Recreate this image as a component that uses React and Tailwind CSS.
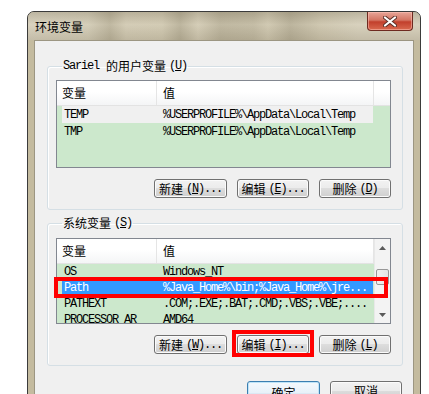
import React from 'react';

const mono = "font-['Liberation_Mono',monospace] tracking-[-1.2px]";

const Mn = ({ children, className = '' }) => (
  <span className={`${mono} ${className}`}>{children}</span>
);

const Acc = ({ k, className = '' }) => (
  <Mn className={className}>
    (<span className="underline underline-offset-[1px]">{k}</span>)
  </Mn>
);

const Btn = ({ label, k, dots = true, width, primary = false }) => {
  const skin = primary
    ? 'border-[#3c7fb1] bg-[linear-gradient(#f4f9fd,#e8f1f9_50%,#dce9f4_50%,#d2e2ef)] shadow-[inset_0_0_0_1px_#bfe4f8]'
    : 'border-[#707070] bg-[linear-gradient(#f2f2f2,#ebebeb_50%,#dddddd_50%,#cfcfcf)] shadow-[inset_0_0_0_1px_#fbfbfb]';
  return (
    <div
      className={`${width} ${primary ? 'h-[23px]' : 'h-[19px]'} shrink-0 flex items-center justify-center rounded-[3px] border ${skin} leading-none`}
    >
      <span>{label}</span>
      {k && <Acc k={k} className="ml-[3px]" />}
      {dots && <Mn>...</Mn>}
    </div>
  );
};

const Arrow = ({ down }) => (
  <svg width="7" height="4" viewBox="0 0 7 4">
    <path d={down ? 'M0 0H7L3.5 4Z' : 'M0 4H7L3.5 0Z'} fill="#5a5a5a" />
  </svg>
);

const Header = () => (
  <div className="h-[25px] shrink-0 flex bg-[linear-gradient(#ffffff,#ffffff_45%,#f4f5f6)] border-b border-[#e3e3e3]">
    <div className="w-[100px] flex items-center pl-[5px] border-r border-[#e5e5e5]">变量</div>
    <div className="w-[217px] flex items-center pl-[6px] border-r border-[#e5e5e5]">值</div>
    <div className="flex-1" />
  </div>
);

const Row = ({ name, value, sel, h }) => {
  const skin =
    sel === 'active'
      ? 'bg-[#3399ff] text-white'
      : sel === 'inactive'
        ? 'bg-[#f0f0f0]'
        : '';
  return (
    <div className={`${h} shrink-0 ml-[5px] w-[311px] flex items-center leading-none ${skin}`}>
      <div className={`w-[95px] pl-[2px] whitespace-nowrap overflow-hidden ${mono}`}>{name}</div>
      <div className={`w-[216px] pl-[6px] whitespace-nowrap overflow-hidden ${mono}`}>{value}</div>
    </div>
  );
};

const VarList = ({ rows, height, rowH, scroll }) => (
  <div className={`${height} flex border border-[#828790] bg-[#cce8cc] overflow-hidden`}>
    <div className="flex-1 min-w-0 flex flex-col">
      <Header />
      {rows.map((r) => (
        <Row key={r.name} {...r} h={rowH} />
      ))}
    </div>
    {scroll && (
      <div className="w-[16px] shrink-0 flex flex-col bg-[#f3f3f3] border-l border-[#e8e8e8]">
        <div className="h-[17px] flex items-center justify-center">
          <Arrow />
        </div>
        <div className="h-[13px]" />
        <div className="h-[16px] mx-[1px] rounded-[2px] border border-[#979797] bg-[linear-gradient(90deg,#f0f0f0,#e4e4e4)]" />
        <div className="flex-1" />
        <div className="h-[17px] flex items-center justify-center">
          <Arrow down />
        </div>
      </div>
    )}
  </div>
);

const Group = ({ legend, mt, listMt, children, buttons }) => (
  <fieldset
    className={`${mt} ml-[12px] w-[356px] pl-[8px] pr-[11px] pb-[11px] border border-[#d5dfe5] rounded-[3px] shadow-[inset_1px_1px_0_#ffffff]`}
  >
    <legend className="ml-[6px] px-[1px] leading-[14px] h-[14px] flex items-center">{legend}</legend>
    <div className={listMt}>{children}</div>
    <div className="mt-[11px] flex justify-end gap-[10px]">{buttons}</div>
  </fieldset>
);

const userRows = [
  { name: 'TEMP', value: '%USERPROFILE%\\AppData\\Local\\Temp', sel: 'inactive' },
  { name: 'TMP', value: '%USERPROFILE%\\AppData\\Local\\Temp' },
];

const sysRows = [
  { name: 'OS', value: 'Windows_NT' },
  { name: 'Path', value: '%Java_Home%\\bin;%Java_Home%\\jre...', sel: 'active' },
  { name: 'PATHEXT', value: '.COM;.EXE;.BAT;.CMD;.VBS;.VBE;....' },
  { name: 'PROCESSOR_AR', value: 'AMD64' },
];

export default function App() {
  return (
    <div className="h-[394px] w-[429px] overflow-hidden bg-white font-['Noto_Sans_CJK_SC',sans-serif] text-[12px] text-black">
      <div className="mt-[11px] ml-[27px] w-[394px] h-[420px] flex flex-col border border-[#3b3b3b] rounded-t-[7px] bg-[#c4bb9f]">
        {/* title bar */}
        <div className="h-[28px] shrink-0 flex items-start rounded-t-[6px] bg-[linear-gradient(180deg,rgba(70,60,40,0.18),rgba(255,255,255,0.05)_45%,rgba(60,50,30,0.12)),linear-gradient(90deg,#d7d0bc,#d3ccb6_60px,#bdb59d_82px,#d2cab3_98px,#d1c9b1_134px,#bab29a_152px,#d3cbb4_170px,#bdb59d_192px,#c2baa2_226px,#cfc7af_240px,#b9b199_262px,#cdc5ad_292px,#d6cfba_330px,#d6cfba)]">
          <div className="pl-[7px] pt-[8px] leading-[14px]">环境变量</div>
          <div className="ml-auto mr-[7px] w-[46px] h-[19px] flex items-center justify-center rounded-b-[4px] border border-t-0 border-[#6e2a20] bg-[linear-gradient(#e8a598,#d47563_45%,#c23f2c_55%,#d9694f)] shadow-[inset_0_0_0_1px_rgba(255,200,190,0.5)]">
            <svg width="14" height="11" viewBox="0 0 14 11">
              <path d="M2 1.5L12 9.5M12 1.5L2 9.5" stroke="#5a3028" strokeWidth="4" strokeLinecap="round" />
              <path d="M2 1.5L12 9.5M12 1.5L2 9.5" stroke="#ffffff" strokeWidth="2.2" strokeLinecap="round" />
            </svg>
          </div>
        </div>

        {/* client area */}
        <div className="mx-[6px] flex-1 relative border border-[#9c9682] bg-[#f0f0f0]">
          <Group
            mt="mt-[18px]"
            listMt="mt-[7px]"
            legend={
              <>
                <Mn>Sariel</Mn>
                <span className="ml-[7px]">的用户变量</span>
                <Acc k="U" className="ml-[3px]" />
              </>
            }
            buttons={
              <>
                <Btn label="新建" k="N" width="w-[73px]" />
                <Btn label="编辑" k="E" width="w-[72px]" />
                <Btn label="删除" k="D" dots={false} width="w-[72px]" />
              </>
            }
          >
            <VarList rows={userRows} height="h-[88px]" rowH="h-[17px]" />
          </Group>

          <Group
            mt="mt-[6px]"
            listMt="mt-[8px]"
            legend={
              <>
                <span>系统变量</span>
                <Acc k="S" className="ml-[3px]" />
              </>
            }
            buttons={
              <>
                <Btn label="新建" k="W" width="w-[73px]" />
                <Btn label="编辑" k="I" width="w-[72px]" />
                <Btn label="删除" k="L" dots={false} width="w-[72px]" />
              </>
            }
          >
            <VarList rows={sysRows} height="h-[86px]" rowH="h-[16px]" scroll />
          </Group>

          <div className="mt-[15px] mr-[11px] flex justify-end gap-[10px]">
            <Btn label="确定" dots={false} width="w-[73px]" primary />
            <Btn label="取消" dots={false} width="w-[72px]" />
          </div>

          {/* red annotation boxes */}
          <div className="absolute left-[19px] top-[236px] w-[334px] h-[21px] border-[4px] border-[#ff0000] pointer-events-none" />
          <div className="absolute left-[197px] top-[289px] w-[82px] h-[27px] border-[4px] border-[#ff0000] pointer-events-none" />
        </div>
      </div>
    </div>
  );
}
